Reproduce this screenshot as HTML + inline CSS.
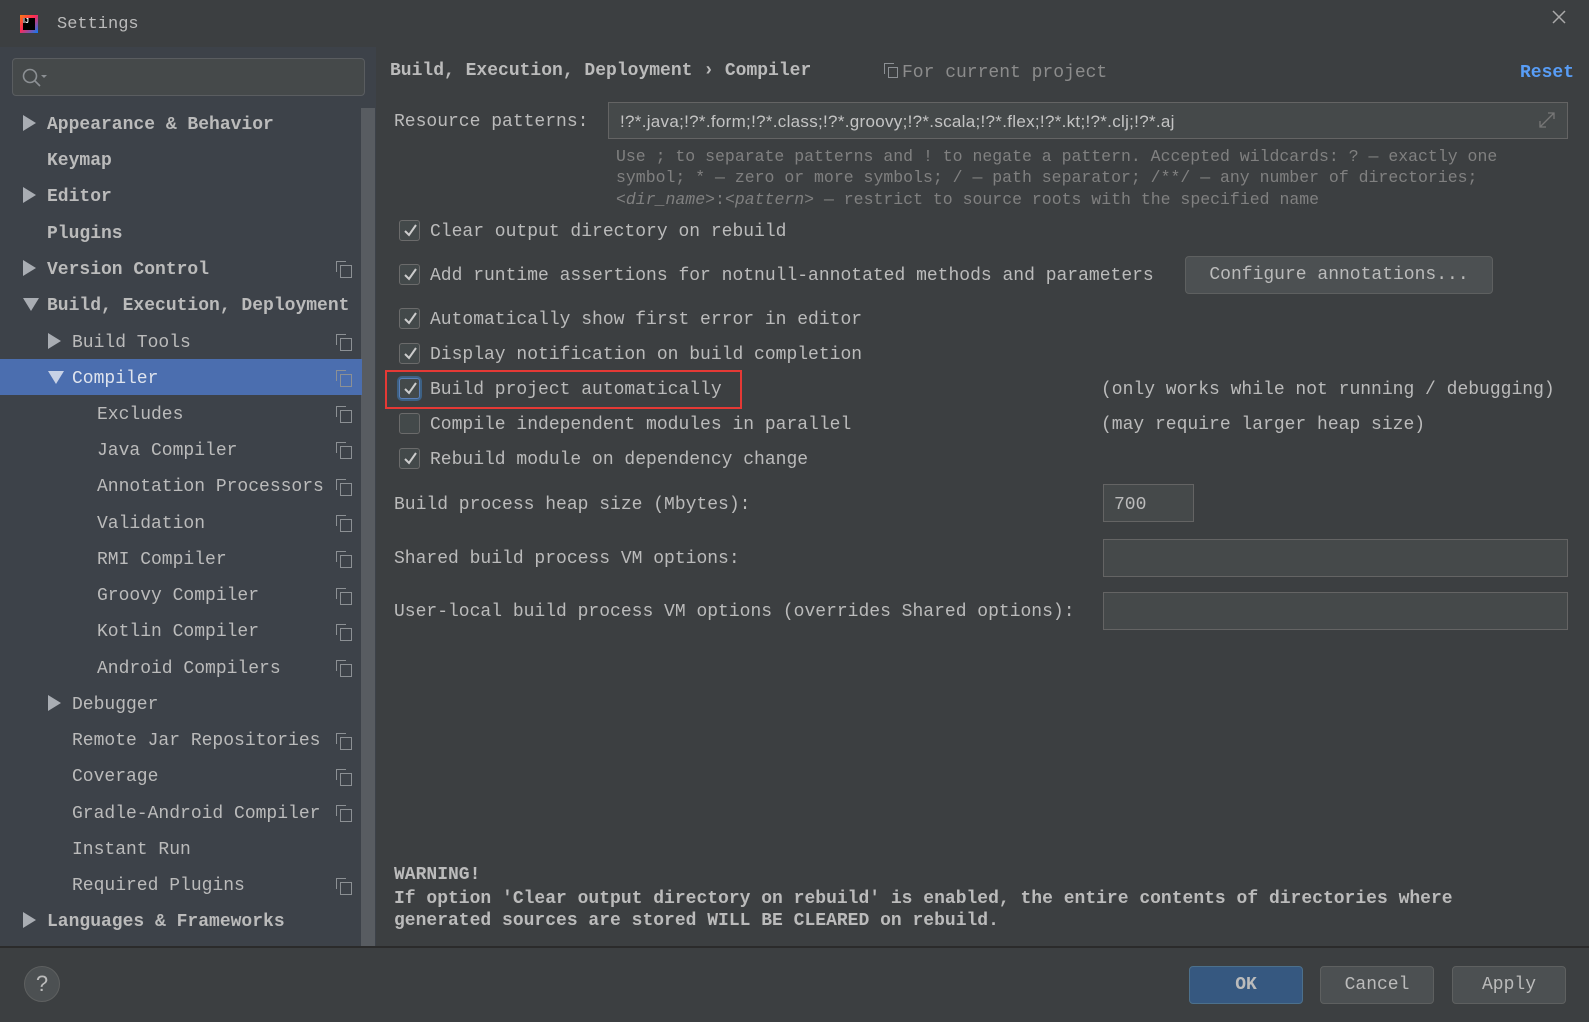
<!DOCTYPE html><html><head><style>
*{margin:0;padding:0;box-sizing:border-box}
body{width:1589px;height:1022px;background:#3c3f41;font-family:"Liberation Mono","Courier New",monospace;font-size:18px;color:#bbbbbb;position:relative;overflow:hidden}
.a{position:absolute;white-space:nowrap}
.t{height:24px;line-height:24px;transform:translateY(2px)}
.b{font-weight:bold}
.side{position:absolute;left:0;top:47px;width:376px;height:900px;background:#3d4249}
.sel{position:absolute;left:0;width:362px;height:36px;background:#4b6eaf}
.tri{position:absolute;width:0;height:0;border-top:8px solid transparent;border-bottom:8px solid transparent;border-left:13px solid #a9adb3}
.tri.d{border-left:8px solid transparent;border-right:8px solid transparent;border-top:13px solid #a9adb3;border-bottom:0}
.cp{position:absolute;width:12px;height:13px;border:1.5px solid #8c9094}
.cp:after{content:"";position:absolute;left:-5px;top:-5px;width:9px;height:10px;border-left:1.5px solid #8c9094;border-top:1.5px solid #8c9094}
.cb{position:absolute;left:399px;width:21px;height:21px;border:1px solid #6b6b6b;border-radius:3px;background:#43494a}
.cb svg{position:absolute;left:2px;top:2px}
.fld{position:absolute;border:1px solid #646464;background:#45494a}
.btn{position:absolute;height:38px;line-height:36px;text-align:center;border:1px solid #5e6060;border-radius:4px;background:#4c5052}
.h{color:#808080;font-size:16.5px}
</style></head><body>
<div class="a" style="left:20px;top:15px;width:18px;height:18px;background:linear-gradient(135deg,#f97a12,#fe2857 45%,#087cfa)"></div>
<div class="a" style="left:23px;top:18px;width:12px;height:12px;background:#000;color:#fff;font-size:7px;line-height:8px;font-family:'Liberation Sans';font-weight:bold">IJ</div>
<div class="a t" style="left:57px;top:11px;font-size:17px">Settings</div>
<svg class="a" style="left:1552px;top:10px" width="14" height="14"><path d="M1 1L13 13M13 1L1 13" stroke="#aaa" stroke-width="1.5"/></svg>

<div class="side"></div>
<div class="a" style="left:12px;top:58px;width:353px;height:38px;border:1px solid #5a5d60;border-radius:4px;background:#45494a"></div>
<svg class="a" style="left:21px;top:67px" width="28" height="22"><circle cx="9" cy="9" r="6.5" fill="none" stroke="#8c9094" stroke-width="1.6"/><path d="M14 14l5 5" stroke="#8c9094" stroke-width="1.6"/><path d="M20 8h6l-3 3z" fill="#8c9094"/></svg>
<div class="a" style="left:361px;top:108px;width:14px;height:838px;background:#585c61"></div>
<div class="sel" style="top:359px"></div>

<div class="tri" style="left:23px;top:115px"></div><div class="a t b" style="left:47px;top:111px">Appearance &amp; Behavior</div>
<div class="a t b" style="left:47px;top:147px">Keymap</div>
<div class="tri" style="left:23px;top:187px"></div><div class="a t b" style="left:47px;top:183px">Editor</div>
<div class="a t b" style="left:47px;top:220px">Plugins</div>
<div class="tri" style="left:23px;top:260px"></div><div class="a t b" style="left:47px;top:256px">Version Control</div><div class="cp" style="left:340px;top:265px"></div>
<div class="tri d" style="left:23px;top:298px"></div><div class="a t b" style="left:47px;top:292px;width:302px;overflow:hidden">Build, Execution, Deployment</div>
<div class="tri" style="left:48px;top:333px"></div><div class="a t" style="left:72px;top:329px">Build Tools</div><div class="cp" style="left:340px;top:338px"></div>
<div class="tri d" style="left:48px;top:371px;border-top-color:#c8d2e6"></div><div class="a t" style="left:72px;top:365px;color:#dfe4ee">Compiler</div><div class="cp" style="left:340px;top:374px"></div>
<div class="a t" style="left:97px;top:401px">Excludes</div><div class="cp" style="left:340px;top:410px"></div>
<div class="a t" style="left:97px;top:437px">Java Compiler</div><div class="cp" style="left:340px;top:446px"></div>
<div class="a t" style="left:97px;top:473px">Annotation Processors</div><div class="cp" style="left:340px;top:483px"></div>
<div class="a t" style="left:97px;top:510px">Validation</div><div class="cp" style="left:340px;top:519px"></div>
<div class="a t" style="left:97px;top:546px">RMI Compiler</div><div class="cp" style="left:340px;top:555px"></div>
<div class="a t" style="left:97px;top:582px">Groovy Compiler</div><div class="cp" style="left:340px;top:592px"></div>
<div class="a t" style="left:97px;top:618px">Kotlin Compiler</div><div class="cp" style="left:340px;top:628px"></div>
<div class="a t" style="left:97px;top:655px">Android Compilers</div><div class="cp" style="left:340px;top:664px"></div>
<div class="tri" style="left:48px;top:695px"></div><div class="a t" style="left:72px;top:691px">Debugger</div>
<div class="a t" style="left:72px;top:727px">Remote Jar Repositories</div><div class="cp" style="left:340px;top:737px"></div>
<div class="a t" style="left:72px;top:763px">Coverage</div><div class="cp" style="left:340px;top:773px"></div>
<div class="a t" style="left:72px;top:800px">Gradle-Android Compiler</div><div class="cp" style="left:340px;top:809px"></div>
<div class="a t" style="left:72px;top:836px">Instant Run</div>
<div class="a t" style="left:72px;top:872px">Required Plugins</div><div class="cp" style="left:340px;top:882px"></div>
<div class="tri" style="left:23px;top:912px"></div><div class="a t b" style="left:47px;top:908px">Languages &amp; Frameworks</div>

<div class="a t b" style="left:390px;top:57px">Build, Execution, Deployment › Compiler</div>
<div class="cp" style="left:888px;top:67px;width:10px;height:11px"></div>
<div class="a t" style="left:902px;top:59px;color:#8c8c8c">For current project</div>
<div class="a t b" style="left:1520px;top:59px;color:#589df6">Reset</div>

<div class="a t" style="left:394px;top:108px">Resource patterns:</div>
<div class="fld" style="left:608px;top:102px;width:960px;height:37px"></div>
<div class="a t" style="left:620px;top:108px;font-family:'Liberation Sans';font-size:17px;letter-spacing:.3px;color:#c4c4c4">!?*.java;!?*.form;!?*.class;!?*.groovy;!?*.scala;!?*.flex;!?*.kt;!?*.clj;!?*.aj</div>
<svg class="a" style="left:1538px;top:111px" width="18" height="18"><path d="M2 16L16 2M10 2h6v6M2 10v6h6" fill="none" stroke="#777" stroke-width="1.3"/></svg>
<div class="a h" style="left:616px;top:147px">Use ; to separate patterns and ! to negate a pattern. Accepted wildcards: ? — exactly one</div>
<div class="a h" style="left:616px;top:168px">symbol; * — zero or more symbols; / — path separator; /**/ — any number of directories;</div>
<div class="a h" style="left:616px;top:190px"><i>&lt;dir_name&gt;</i>:<i>&lt;pattern&gt;</i> — restrict to source roots with the specified name</div>

<div class="cb" style="top:220px"><svg width="16" height="16"><path d="M3 8l4 4 7-10" fill="none" stroke="#ccc" stroke-width="2"/></svg></div>
<div class="a t" style="left:430px;top:218px">Clear output directory on rebuild</div>
<div class="cb" style="top:264px"><svg width="16" height="16"><path d="M3 8l4 4 7-10" fill="none" stroke="#ccc" stroke-width="2"/></svg></div>
<div class="a t" style="left:430px;top:262px">Add runtime assertions for notnull-annotated methods and parameters</div>
<div class="btn" style="left:1185px;top:256px;width:308px">Configure annotations...</div>
<div class="cb" style="top:308px"><svg width="16" height="16"><path d="M3 8l4 4 7-10" fill="none" stroke="#ccc" stroke-width="2"/></svg></div>
<div class="a t" style="left:430px;top:306px">Automatically show first error in editor</div>
<div class="cb" style="top:343px"><svg width="16" height="16"><path d="M3 8l4 4 7-10" fill="none" stroke="#ccc" stroke-width="2"/></svg></div>
<div class="a t" style="left:430px;top:341px">Display notification on build completion</div>
<div class="a" style="left:385px;top:370px;width:357px;height:39px;border:2px solid #e53935"></div>
<div class="cb" style="top:378px;border-color:#5a7fb8;box-shadow:0 0 0 2px #3d6185"><svg width="16" height="16"><path d="M3 8l4 4 7-10" fill="none" stroke="#ccc" stroke-width="2"/></svg></div>
<div class="a t" style="left:430px;top:376px">Build project automatically</div>
<div class="a t" style="left:1101px;top:376px">(only works while not running / debugging)</div>
<div class="cb" style="top:413px"></div>
<div class="a t" style="left:430px;top:411px">Compile independent modules in parallel</div>
<div class="a t" style="left:1101px;top:411px">(may require larger heap size)</div>
<div class="cb" style="top:448px"><svg width="16" height="16"><path d="M3 8l4 4 7-10" fill="none" stroke="#ccc" stroke-width="2"/></svg></div>
<div class="a t" style="left:430px;top:446px">Rebuild module on dependency change</div>

<div class="a t" style="left:394px;top:491px">Build process heap size (Mbytes):</div>
<div class="fld" style="left:1103px;top:484px;width:91px;height:38px"></div>
<div class="a t" style="left:1114px;top:491px">700</div>
<div class="a t" style="left:394px;top:545px">Shared build process VM options:</div>
<div class="fld" style="left:1103px;top:539px;width:465px;height:38px"></div>
<div class="a t" style="left:394px;top:598px">User-local build process VM options (overrides Shared options):</div>
<div class="fld" style="left:1103px;top:592px;width:465px;height:38px"></div>

<div class="a t b" style="left:394px;top:861px">WARNING!</div>
<div class="a t b" style="left:394px;top:885px">If option 'Clear output directory on rebuild' is enabled, the entire contents of directories where</div>
<div class="a t b" style="left:394px;top:907px">generated sources are stored WILL BE CLEARED on rebuild.</div>

<div class="a" style="left:0;top:946px;width:1589px;height:2px;background:#2b2b2b"></div>
<div class="a" style="left:24px;top:966px;width:36px;height:36px;border-radius:50%;border:1px solid #5e6060;background:#4c5052;text-align:center;line-height:34px;font-family:'Liberation Sans';font-size:22px;color:#bbb">?</div>
<div class="btn b" style="left:1189px;top:966px;width:114px;background:#365880;border-color:#4c708c">OK</div>
<div class="btn" style="left:1320px;top:966px;width:114px">Cancel</div>
<div class="btn" style="left:1452px;top:966px;width:114px">Apply</div>
</body></html>
